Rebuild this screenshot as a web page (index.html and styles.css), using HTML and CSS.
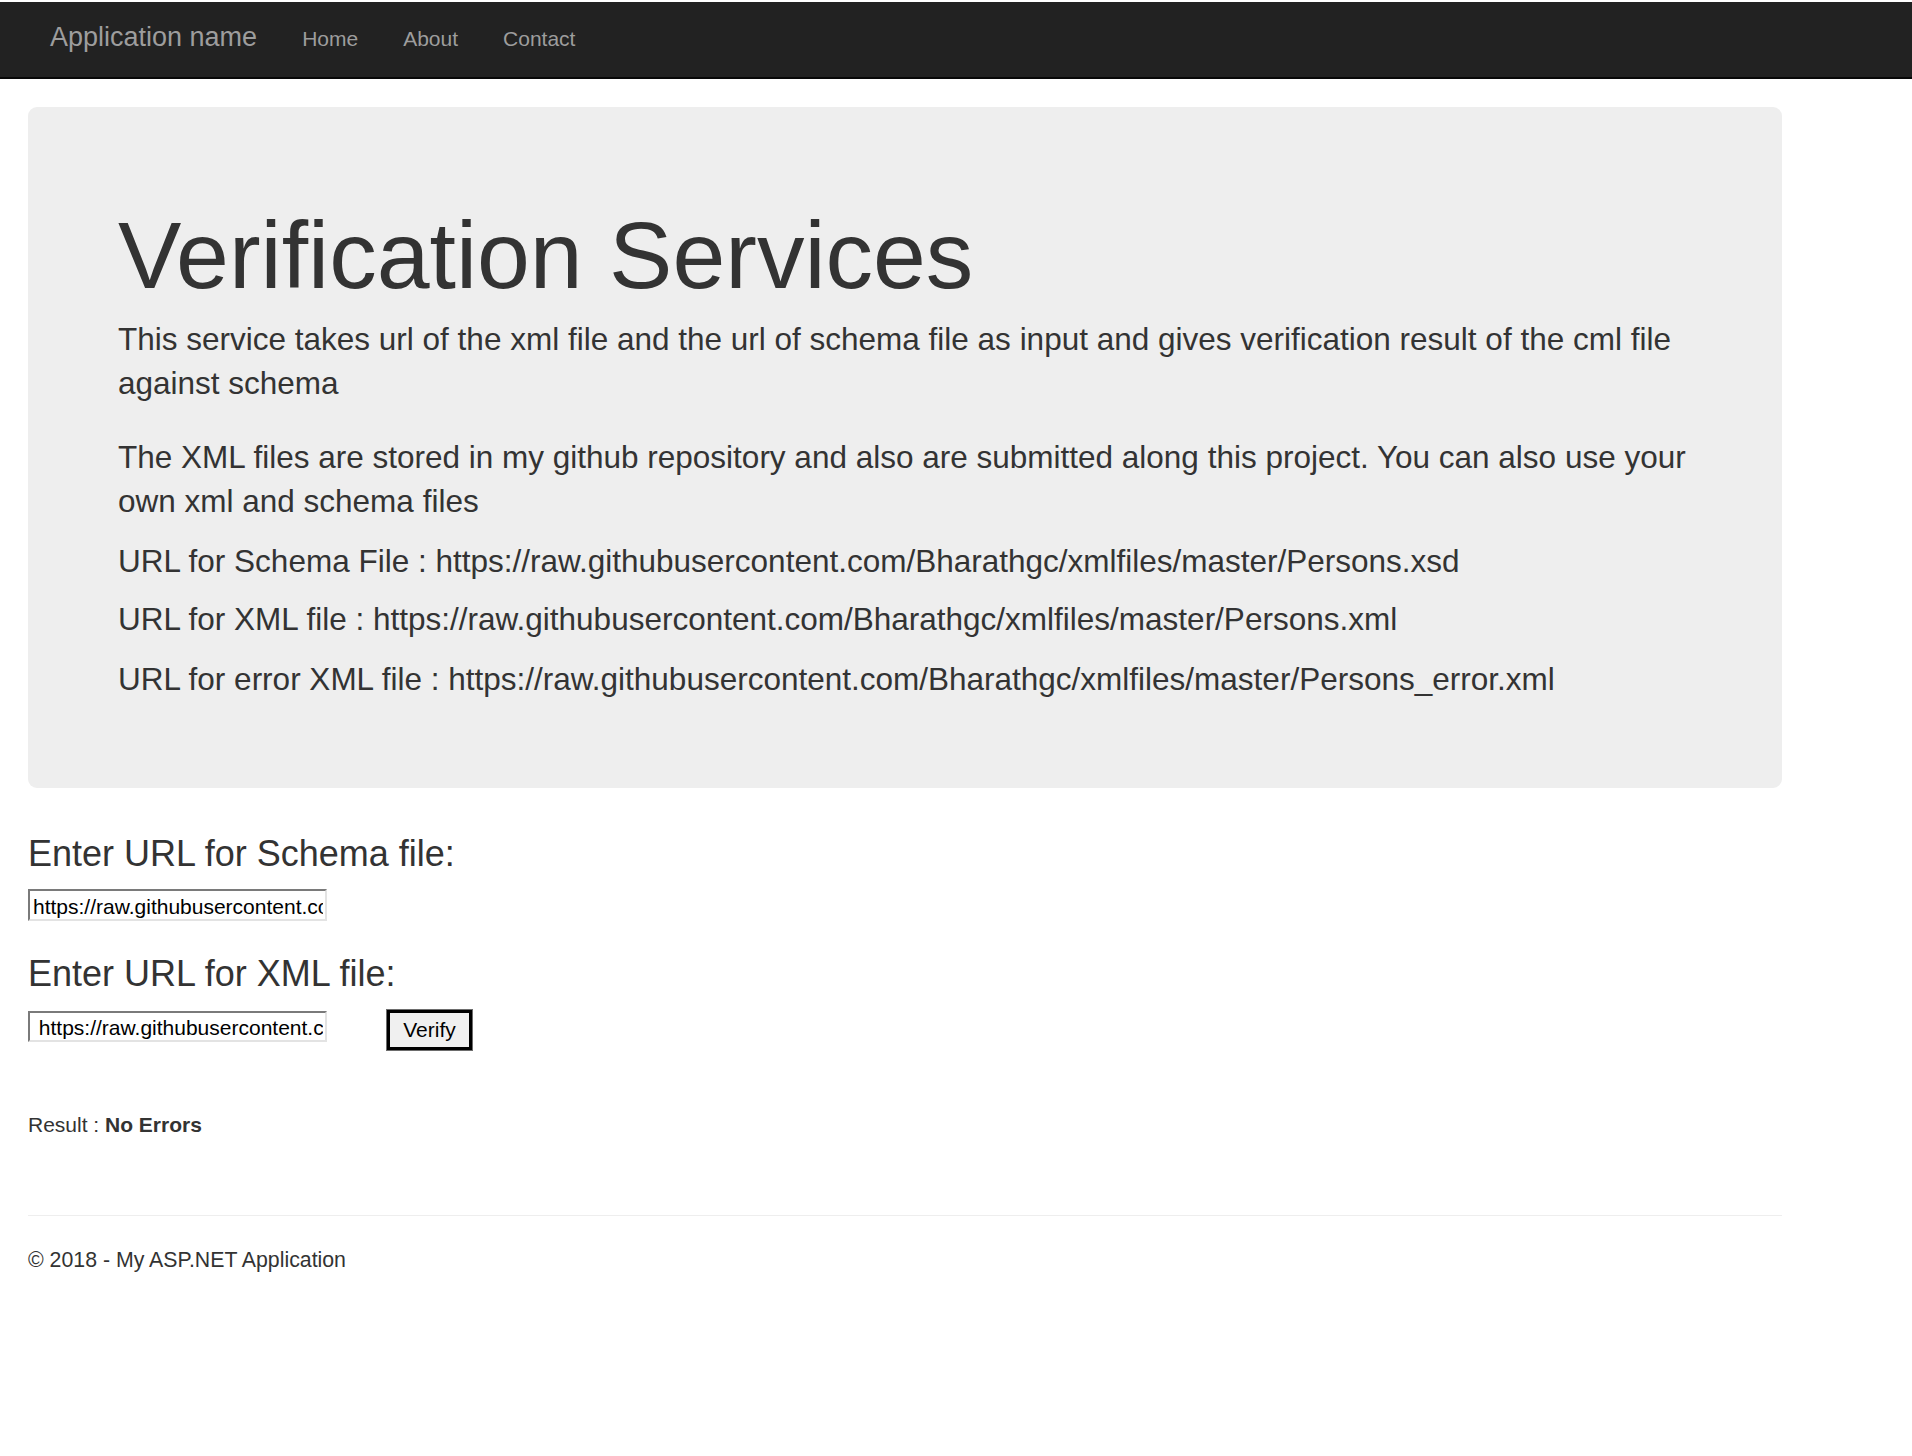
FILE: index.html
```html
<!DOCTYPE html>
<html lang="en">
<head>
<meta charset="utf-8">
<title>Verification Services - My ASP.NET Application</title>
<link rel="stylesheet" href="styles.css">
</head>
<body>
<div class="topstrip"></div>
<header class="navbar">
  <a class="brand" href="#">Application name</a>
  <nav class="nav">
    <a href="#">Home</a>
    <a href="#">About</a>
    <a href="#">Contact</a>
  </nav>
</header>
<main class="page">
  <section class="jumbotron">
    <h1 class="title">Verification Services</h1>
    <p class="text intro">This service takes url of the xml file and the url of schema file as input and gives verification result of the cml file against schema</p>
    <p class="text note">The XML files are stored in my github repository and also are submitted along this project. You can also use your own xml and schema files</p>
    <p class="text url url-1">URL for Schema File : https://raw.githubusercontent.com/Bharathgc/xmlfiles/master/Persons.xsd</p>
    <p class="text url url-2">URL for XML file : https://raw.githubusercontent.com/Bharathgc/xmlfiles/master/Persons.xml</p>
    <p class="text url url-3">URL for error XML file : https://raw.githubusercontent.com/Bharathgc/xmlfiles/master/Persons_error.xml</p>
  </section>
  <form class="verify-form" onsubmit="return false;">
    <h3 class="field-label first">Enter URL for Schema file:</h3>
    <input class="url-input" type="text" value="https://raw.githubusercontent.com/Bharathgc/xmlfiles/master/Persons.xsd">
    <h3 class="field-label second">Enter URL for XML file:</h3>
    <div class="row">
      <input class="url-input" type="text" value=" https://raw.githubusercontent.com/Bharathgc/xmlfiles/master/Persons.xml">
      <button type="button" class="verify-btn">Verify</button>
    </div>
  </form>
  <p class="result">Result : <b>No Errors</b></p>
  <hr class="rule">
  <footer class="footer">
    <p>&copy; 2018 - My ASP.NET Application</p>
  </footer>
</main>
</body>
</html>
```
FILE: styles.css
```css
* {
  box-sizing: border-box;
}

html,
body {
  margin: 0;
  padding: 0;
  background: #fff;
}

body {
  font-family: "Liberation Sans", Arial, Helvetica, sans-serif;
  color: #333;
  font-size: 21px;
  line-height: 30px;
}

.topstrip {
  height: 2px;
  background: #fff;
}

.navbar {
  height: 77px;
  background: #222;
  border-bottom: 2px solid #080808;
  display: flex;
  align-items: baseline;
  padding: 20px 0 0 50px;
}

.brand {
  font-size: 27px;
  line-height: 30px;
  color: #9d9d9d;
  text-decoration: none;
  margin-right: 45px;
}

.nav {
  display: flex;
  align-items: baseline;
  gap: 45px;
}

.nav a {
  font-size: 21px;
  line-height: 30px;
  color: #9d9d9d;
  text-decoration: none;
}

.page {
  padding: 28px 0 0 28px;
  width: 1782px;
}

.jumbotron {
  width: 1754px;
  background: #eee;
  border-radius: 9px;
  padding: 96px 70px 87px 90px;
}

.title {
  font-size: 95px;
  line-height: 104px;
  font-weight: 400;
  margin: 0 0 10px;
  color: #333;
}

.text {
  font-size: 31.5px;
  line-height: 44px;
  margin: 0;
}

.intro {
  margin-bottom: 30px;
}

.note {
  margin-bottom: 16px;
}

.url-1 {
  margin-bottom: 14px;
}

.url-2 {
  margin-bottom: 16px;
}

.verify-form {
  margin: 0;
}

.field-label {
  font-size: 36px;
  line-height: 39.6px;
  font-weight: 400;
  margin: 0;
  color: #333;
}

.field-label.first {
  margin-top: 46px;
}

.field-label.second {
  margin-top: 33px;
}

.url-input {
  display: block;
  width: 299px;
  height: 32px;
  margin: 15.5px 0 0;
  padding: 3px 2px 0 3px;
  font-family: "Liberation Sans", Arial, sans-serif;
  font-size: 21px;
  color: #000;
  background: #fff;
  border-style: solid;
  border-width: 2px;
  border-color: #7a7a7a #e3e3e3 #e3e3e3 #7a7a7a;
  border-radius: 0;
  outline: none;
}

.row {
  display: flex;
  align-items: flex-start;
  margin-top: 15px;
}

.row .url-input {
  margin-top: 2px;
  height: 31px;
}

.verify-btn {
  margin-left: 59px;
  width: 87px;
  height: 42px;
  padding: 0;
  font-family: "Liberation Sans", Arial, sans-serif;
  font-size: 21px;
  color: #000;
  background: #f0f0f0;
  border: 1px solid #6d6d6d;
  box-shadow: inset 0 0 0 3px #000;
  border-radius: 0;
}

.result {
  margin: 59px 0 0;
  font-size: 21px;
  line-height: 30px;
}

.result b {
  font-weight: 700;
}

.rule {
  width: 1754px;
  margin: 75px 0 0;
  border: 0;
  border-top: 1.5px solid #eee;
  height: 0;
}

.footer p {
  margin: 29px 0 0;
  font-size: 21.3px;
  line-height: 30px;
}
```
